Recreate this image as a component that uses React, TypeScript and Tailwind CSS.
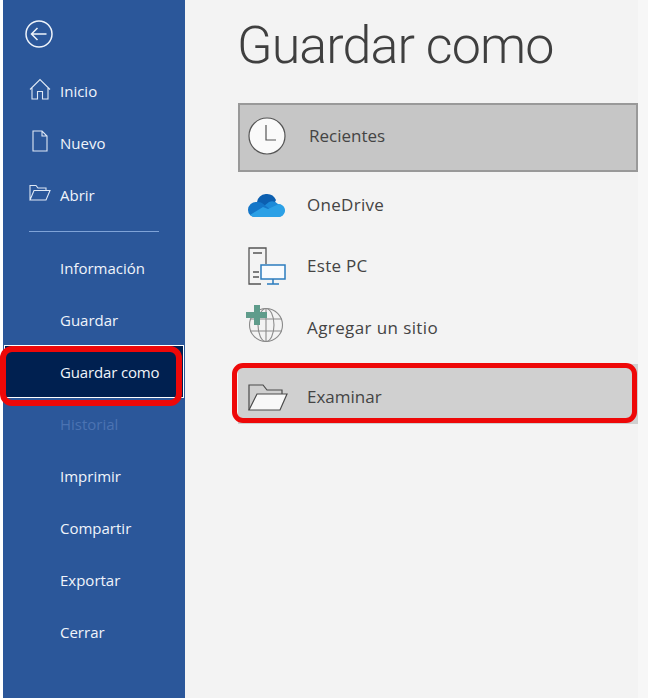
import type { ReactNode } from 'react';

const font = { fontFamily: '"Open Sans", "Noto Sans", sans-serif' };

function HomeIcon() {
  return (
    <svg width="22" height="22" viewBox="0 0 22 22" fill="none" stroke="#dfe8f5" strokeWidth="1.1">
      <path d="M1 11.5 11 1.5l10 10M3 9.5V21h5.5v-7.5h5V21H19V9.5" />
    </svg>
  );
}

function PageIcon() {
  return (
    <svg width="16" height="22" viewBox="0 0 16 22" fill="none" stroke="#dfe8f5" strokeWidth="1.1">
      <path d="M1 1h9l5 5v15H1zM10 1v5h5" />
    </svg>
  );
}

function OpenIcon() {
  return (
    <svg width="22" height="17" viewBox="0 0 22 17" fill="none" stroke="#dfe8f5" strokeWidth="1.1">
      <path d="M1 15.5V1h6l2 2.5h8V6M1 15.5 5 6h16l-4 9.5z" />
    </svg>
  );
}

function SideItem({ icon, label, muted }: { icon?: ReactNode; label: string; muted?: boolean }) {
  return (
    <div className={`relative flex h-[52px] items-center pl-[57px] text-[15px] ${muted ? 'text-[#4b73b2]' : 'text-[#f0f4fa]'}`}>
      {icon && <span className="absolute left-[25px] top-[24px] flex w-[24px] -translate-y-1/2 justify-center">{icon}</span>}
      {label}
    </div>
  );
}

function PlaceRow({ icon, label, className }: { icon: ReactNode; label: string; className?: string }) {
  return (
    <div className={`flex items-center text-[17px] text-[#444444] ${className ?? ''}`}>
      <span className="flex w-[69px] shrink-0 pl-[10px]">{icon}</span>
      {label}
    </div>
  );
}

export default function App() {
  return (
    <div className="relative flex h-[698px] w-[648px] overflow-hidden bg-white pl-[3px]" style={font}>
      {/* Sidebar */}
      <aside className="w-[182px] shrink-0 bg-[#2b579a]">
        <div className="flex h-[65px] items-start pl-[22px] pt-[18px]">
          <svg width="30" height="32" viewBox="0 0 30 32" fill="none" stroke="#eef3fa" strokeWidth="1.5">
            <circle cx="14" cy="16" r="13" />
            <path d="M6.5 16h15M12.5 10l-6 6 6 6" />
          </svg>
        </div>
        <SideItem icon={<HomeIcon />} label="Inicio" />
        <SideItem icon={<PageIcon />} label="Nuevo" />
        <SideItem icon={<OpenIcon />} label="Abrir" />
        <div className="mb-[10px] ml-[26px] mt-[10px] h-px w-[130px] bg-[#7fa3d8]" />
        <SideItem label="Información" />
        <SideItem label="Guardar" />
        <div className="h-[53px]">
          <div className="-mt-px ml-px w-[180px] border border-white bg-[#002050]">
            <div className="flex h-[51px] items-center pl-[55px] pt-[2px] text-[15px] tracking-[-0.15px] text-[#f0f4fa]">Guardar como</div>
          </div>
        </div>
        <SideItem label="Historial" muted />
        <SideItem label="Imprimir" />
        <SideItem label="Compartir" />
        <SideItem label="Exportar" />
        <SideItem label="Cerrar" />
      </aside>

      {/* Main */}
      <main className="flex-1 bg-[#f3f3f3] pl-[53px]">
        <h1 className="-ml-px mb-[20px] mt-[12px] h-[71px] text-[52px] font-light leading-[67px] tracking-[-0.9px] text-[#3f3f3f]" style={{ fontFamily: 'Roboto, sans-serif' }}>Guardar como</h1>
        <div className="flex h-[69px] items-center border-2 border-[#999999] bg-[#c6c6c6] pb-[3px] text-[17px] text-[#444444]">
          <span className="flex w-[69px] shrink-0 pl-[8px]">
            <svg width="38" height="38" viewBox="0 0 38 38" fill="#fafafa" stroke="#555555" strokeWidth="1.2">
              <circle cx="19" cy="19" r="18" />
              <path d="M18 8v15h10" fill="none" />
            </svg>
          </span>
          Recientes
        </div>
        <PlaceRow
          className="mt-[2px] h-[62px] pb-[1px] tracking-[0.3px]"
          label="OneDrive"
          icon={
            <svg width="37" height="25" viewBox="0 0 37 25">
              <path d="M9 10a10 10 0 0 1 19-2l-5 10-13-2z" fill="#0c5fb0" />
              <path d="M21 10a8 8 0 0 1 9 2a6.5 6.5 0 0 1 0 13H7l9-11z" fill="#1c8ad8" />
              <path d="M0 18a8 8 0 0 1 9-8 7 7 0 0 1 5 1l9 7-10 7H7a7 7 0 0 1-7-7z" fill="#1476c8" />
              <path d="M2 23l13-8 5 2 11-5a6.5 6.5 0 0 1-1 13H7a7 7 0 0 1-5-2z" fill="#2ba0e6" />
            </svg>
          }
        />
        <PlaceRow
          className="h-[62px] pb-[2px] tracking-[0.3px]"
          label="Este PC"
          icon={
            <svg width="38" height="38" viewBox="0 0 38 38" fill="none">
              <path d="M13 37H1V1h17v16" stroke="#555555" strokeWidth="1.3" />
              <path d="M5 6h9M5 25h6M5 30h6" stroke="#555555" strokeWidth="1.3" />
              <rect x="13" y="18" width="24" height="14" fill="#f8fbfe" stroke="#2b7cbf" strokeWidth="1.5" />
              <path d="M25 32v5M19 37h12" stroke="#2b7cbf" strokeWidth="1.5" />
            </svg>
          }
        />
        <PlaceRow
          className="h-[62px] pb-[2px] tracking-[0.4px]"
          label="Agregar un sitio"
          icon={
            <svg className="-ml-[3px] -mt-[8px]" width="40" height="38" viewBox="0 0 40 38" fill="none">
              <g stroke="#8a8a8a" strokeWidth="1.1">
                <circle cx="21" cy="20" r="16.5" />
                <ellipse cx="21" cy="20" rx="8" ry="16.5" />
                <path d="M21 3.5v33M5 14h32M5 26h32" />
              </g>
              <path d="M9 0h6v7h7v6h-7v7H9v-7H1V7h8z" fill="#5f9c8b" />
            </svg>
          }
        />
        <PlaceRow
          className="mt-[4px] h-[60px] bg-[#d0d0d0] pt-[6px]"
          label="Examinar"
          icon={
            <svg width="40" height="29" viewBox="0 0 40 29" fill="none" stroke="#4a4a4a" strokeWidth="1.2">
              <path d="M1 27V2h14l4 5h15v4" />
              <path d="M1 27l8-16h30l-7 16z" fill="#f8f8f8" />
            </svg>
          }
        />
      </main>
      <div className="w-[10px] shrink-0 bg-[#f7f7f7]" />

      {/* Red highlights drawn over the screenshot */}
      <div className="absolute left-0 top-[346px] h-[60px] w-[182px] rounded-[12px] border-[6px] border-[#ee0808]" />
      <div className="absolute left-[232px] top-[363px] h-[60px] w-[405px] rounded-[11px] border-[5px] border-[#ee0808]" />
    </div>
  );
}
